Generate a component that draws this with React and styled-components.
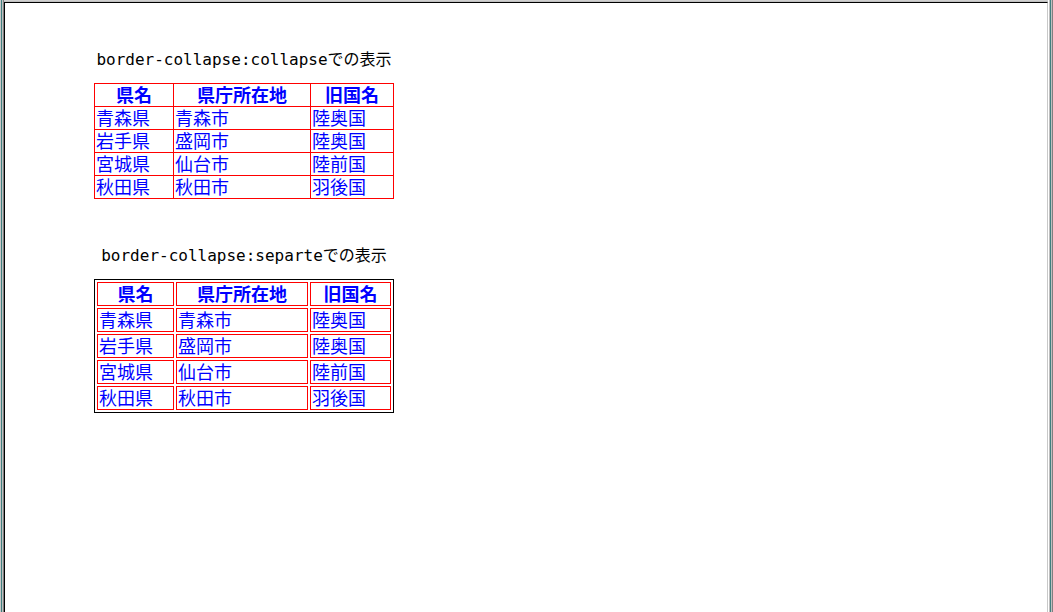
import React from 'react';
import styled, { createGlobalStyle } from 'styled-components';

const prefectures = [
  ['青森県', '青森市', '陸奥国'],
  ['岩手県', '盛岡市', '陸奥国'],
  ['宮城県', '仙台市', '陸前国'],
  ['秋田県', '秋田市', '羽後国']
];

const Global = createGlobalStyle`
  html, body {
    margin: 0;
    padding: 0;
    background: #ffffff;
  }
  body {
    font-family: "Noto Sans CJK JP", "DejaVu Sans", sans-serif;
  }
`;

const Frame = styled.div`
  display: flex;
  box-sizing: border-box;
  width: 1053px;
  height: 612px;
  padding: 2px 5px 0 4px;
  background: #c0c0c0;
  box-shadow: inset 1px 0 0 #c8c8c8, inset 2px 0 0 #408080,
    inset 3px 0 0 #c0c0c0, inset 4px 0 0 #808080, inset -1px 0 0 #808080,
    inset -2px 0 0 #c0c0c0, inset -3px 0 0 #408080, inset -4px 0 0 #c0c0c0,
    inset -5px 0 0 #ffffff, inset 0 1px 0 #d0d0d0;
`;

const Viewport = styled.div`
  flex: 1;
  display: flex;
  flex-direction: column;
  gap: 47px;
  background: #ffffff;
  border-top: 1px solid #000000;
  border-left: 1px solid #000000;
  border-right: 1px solid #c8c8c8;
  padding: 47px 0 0 89px;
`;

const Caption = styled.caption`
  font-family: "DejaVu Sans Mono", "Noto Sans CJK JP", monospace;
  font-size: 16px;
  line-height: 20px;
  color: #000000;
  padding-bottom: 13px;
  white-space: nowrap;
`;

const Table = styled.table`
  width: 300px;
  table-layout: fixed;
  border-collapse: ${p => (p.$separate ? 'separate' : 'collapse')};
  border-spacing: 2px;
  border: ${p => (p.$separate ? '1px solid #000000' : 'none')};
  font-size: 18px;
  line-height: 20px;
  color: #0000ff;
`;

const Head = styled.th`
  border: 1px solid #ff0000;
  padding: 0 1px 2px;
  font-weight: bold;
  text-align: center;
  white-space: nowrap;
`;

const Cell = styled.td`
  border: 1px solid #ff0000;
  padding: 0 1px 2px;
  text-align: left;
  white-space: nowrap;
`;

const PrefTable = ({ title, separate }) => (
  <Table $separate={separate}>
    <Caption>{title}</Caption>
    <colgroup>
      <col style={{ width: separate ? 77 : 79 }} />
      <col style={{ width: separate ? 132 : 137 }} />
      <col />
    </colgroup>
    <thead>
      <tr>
        <Head>県名</Head>
        <Head>県庁所在地</Head>
        <Head>旧国名</Head>
      </tr>
    </thead>
    <tbody>
      {prefectures.map(row => (
        <tr key={row[0]}>
          {row.map(v => (
            <Cell key={v}>{v}</Cell>
          ))}
        </tr>
      ))}
    </tbody>
  </Table>
);

export default function App() {
  return (
    <Frame>
      <Global />
      <Viewport>
        <PrefTable title="border-collapse:collapseでの表示" />
        <PrefTable title="border-collapse:separteでの表示" separate />
      </Viewport>
    </Frame>
  );
}
